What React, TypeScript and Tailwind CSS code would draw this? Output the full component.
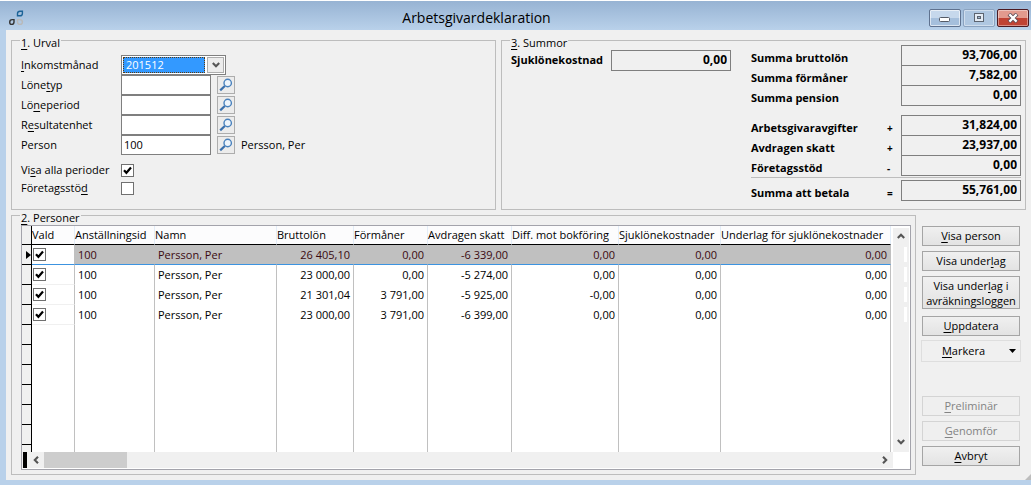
import React from 'react';
import clsx from 'clsx';

type Column = { label: string; col: string; numeric?: boolean };

const columns: Column[] = [
  { label: 'Vald', col: 'w-[43px]' },
  { label: 'Anställningsid', col: 'w-[80px]' },
  { label: 'Namn', col: 'w-[122px]' },
  { label: 'Bruttolön', col: 'w-[77px]', numeric: true },
  { label: 'Förmåner', col: 'w-[74px]', numeric: true },
  { label: 'Avdragen skatt', col: 'w-[84px]', numeric: true },
  { label: 'Diff. mot bokföring', col: 'w-[107px]', numeric: true },
  { label: 'Sjuklönekostnader', col: 'w-[102px]', numeric: true },
  { label: 'Underlag för sjuklönekostnader', col: '', numeric: true },
];

const persons = [
  ['100', 'Persson, Per', '26 405,10', '0,00', '-6 339,00', '0,00', '0,00', '0,00'],
  ['100', 'Persson, Per', '23 000,00', '0,00', '-5 274,00', '0,00', '0,00', '0,00'],
  ['100', 'Persson, Per', '21 301,04', '3 791,00', '-5 925,00', '-0,00', '0,00', '0,00'],
  ['100', 'Persson, Per', '23 000,00', '3 791,00', '-6 399,00', '0,00', '0,00', '0,00'],
];

const emptyRows = [0, 1, 2, 3, 4, 5, 6];

const grossSums = [
  { id: 'brutto', label: 'Summa bruttolön', sign: '', value: '93,706,00' },
  { id: 'formaner', label: 'Summa förmåner', sign: '', value: '7,582,00' },
  { id: 'pension', label: 'Summa pension', sign: '', value: '0,00' },
];

const feeSums = [
  { id: 'avgifter', label: 'Arbetsgivaravgifter', sign: '+', value: '31,824,00' },
  { id: 'skatt', label: 'Avdragen skatt', sign: '+', value: '23,937,00' },
  { id: 'stod', label: 'Företagsstöd', sign: '-', value: '0,00' },
];

// Label with an underlined access key: "Löne|t|yp"
const Key: React.FC<{ text: string }> = ({ text }) => {
  const [before, key, after] = text.split('|');
  return (
    <span>
      {before}
      <span className="underline underline-offset-2">{key}</span>
      {after}
    </span>
  );
};

const Group: React.FC<{ title: string; className?: string; children: React.ReactNode }> = ({ title, className, children }) => (
  <section className={clsx('relative border border-[#bdbdbd]', className)}>
    <h2 className="absolute -top-1 left-2 bg-[#f0f0f0] px-px leading-3">
      <Key text={title} />
    </h2>
    {children}
  </section>
);

const CheckBox: React.FC<{ id?: string; label?: string; checked?: boolean }> = ({ id, label, checked }) => (
  <span className="relative block size-[13px]">
    <input
      id={id}
      type="checkbox"
      aria-label={label}
      defaultChecked={checked}
      className="peer block size-[13px] appearance-none border border-[#707070] bg-white"
    />
    <svg viewBox="0 0 13 13" className="pointer-events-none absolute inset-0 hidden size-[13px] peer-checked:block">
      <path d="M3 6.2 L5.4 8.8 L10 3.6" fill="none" stroke="#000" strokeWidth="2.2" />
    </svg>
  </span>
);

const Chevron: React.FC<{ className?: string }> = ({ className }) => (
  <svg viewBox="0 0 8 6" className={clsx('h-[6px] w-2', className)}>
    <path d="M0.8 1 L4 4.2 L7.2 1" fill="none" stroke="#555" strokeWidth="2.1" />
  </svg>
);

const LookupRow: React.FC<{ id: string; label: string; value?: string; note?: string }> = ({ id, label, value, note }) => (
  <div className="flex h-5 items-center">
    <label htmlFor={id} className="w-[100px] shrink-0">
      <Key text={label} />
    </label>
    <input id={id} defaultValue={value} className="h-5 w-[90px] border border-[#7f7f7f] bg-white px-0.5 pb-0.5 outline-none" />
    <button
      type="button"
      aria-label="Sök"
      className="ml-1.5 flex size-[18px] items-center justify-center border border-[#adadad] bg-[#ececec]"
    >
      <svg viewBox="0 0 14 14" className="size-[14px]">
        <circle cx="8.7" cy="5" r="3.7" fill="#eef5fc" stroke="#4a82bd" strokeWidth="1.4" />
        <path d="M5.8 8 L1.2 12.4" stroke="#3a70ad" strokeWidth="2.2" />
      </svg>
    </button>
    {note && <span className="ml-1.5">{note}</span>}
  </div>
);

const SumRow: React.FC<{ id: string; label: string; sign: string; value: string }> = ({ id, label, sign, value }) => (
  <div className="flex h-5 items-start">
    <label htmlFor={id} className="w-[136px] pt-1 leading-[18px]">
      {label}
    </label>
    <span className="w-[14px] pt-1 text-[10px] leading-[18px]">{sign}</span>
    <input
      id={id}
      readOnly
      value={value}
      className="h-[21px] w-[120px] border border-[#7f7f7f] bg-[#f0f0f0] pr-[3px] pb-0.5 text-right text-[12px] outline-none"
    />
  </div>
);

const ActionButton: React.FC<{ text: string; className?: string; disabled?: boolean; children?: React.ReactNode }> = ({
  text,
  className,
  disabled,
  children,
}) => (
  <button
    type="button"
    disabled={disabled}
    className={clsx(
      'mx-px border leading-4',
      disabled
        ? 'border-[#d4d4d4] bg-[#efefef] text-[#838383]'
        : 'border-[#a5a5a5] bg-linear-to-b from-[#f0f0f0] to-[#e3e3e3]',
      className,
    )}
  >
    {children ?? <Key text={text} />}
  </button>
);

const TitleBar: React.FC = () => (
  <header className="flex h-[30px] items-center border-t border-white bg-linear-to-b from-[#97b3d3] to-[#b9d1ea] pt-1 pr-0.5 pl-2">
    <svg viewBox="0 0 16 16" className="size-4 shrink-0" fill="none" strokeWidth="1.4">
      <path d="M9.5 5.8 V3.6 Q9.5 1.2 12 1.2 H14.4 V3.4 Q14.4 5.8 12 5.8 Z" stroke="#1b6397" />
      <path d="M6 9.6 V12 Q6 14.4 3.8 14.4 Q1.7 14.4 1.7 12.2 Q1.7 9.6 4.2 9.6 H6 Z" stroke="#333" />
      <path d="M9.5 9.6 H12 Q14.4 9.6 14.4 12 Q14.4 14.4 12 14.4 Q9.5 14.4 9.5 12 Z" stroke="#b9b9b9" />
    </svg>
    <h1 className="flex-1 text-center text-[14px] leading-5">Arbetsgivardeklaration</h1>
    <div className="flex gap-0.5">
      <button
        type="button"
        aria-label="Minimera"
        className="flex h-[18px] w-8 items-center justify-center rounded-xs border border-[#5f728f] bg-linear-to-b from-[#c6d8ec] from-50% to-[#a5bfdc] to-50% inset-ring inset-ring-white/60"
      >
        <svg viewBox="0 0 12 10" className="h-[10px] w-3">
          <rect x="0.5" y="4.5" width="10" height="4" rx="1" fill="#fff" stroke="#555b66" />
        </svg>
      </button>
      <button
        type="button"
        aria-label="Maximera"
        className="flex h-[18px] w-8 items-center justify-center rounded-xs border border-[#8ba3c0] bg-[#afc7e1] inset-ring inset-ring-white/40"
      >
        <svg viewBox="0 0 12 10" className="h-[10px] w-3">
          <rect x="1.5" y="0.5" width="9" height="8" fill="#e3ebf4" stroke="#5c6470" />
          <rect x="4.5" y="3.5" width="3" height="2" fill="#9fb6d0" stroke="#5c6470" />
        </svg>
      </button>
      <button
        type="button"
        aria-label="Stäng"
        className="flex h-[18px] w-8 items-center justify-center rounded-xs border border-[#4c1a22] bg-linear-to-b from-[#e29a8e] from-50% to-[#c04334] to-50% inset-ring inset-ring-white/40"
      >
        <svg viewBox="0 0 12 10" className="h-[10px] w-3">
          <path d="M2 1 L10 9 M10 1 L2 9" stroke="#5a4a55" strokeWidth="4" />
          <path d="M2.4 1.4 L9.6 8.6 M9.6 1.4 L2.4 8.6" stroke="#fff" strokeWidth="2.2" />
        </svg>
      </button>
    </div>
  </header>
);

const PersonTable: React.FC = () => (
  <div className="border border-[#a3a3ab] bg-white pr-px">
    <div className="flex h-[226px]">
      <div className="min-w-0 flex-1 overflow-hidden">
        <table className="w-full table-fixed border-separate border-spacing-0">
          <colgroup>
            <col className="w-[10px]" />
            {columns.map((c) => (
              <col key={c.label} className={c.col} />
            ))}
          </colgroup>
          <thead>
            <tr className="h-[19px]">
              <td className="border-r border-b border-black bg-[#f0f0f0] p-0" />
              {columns.map((c) => (
                <th
                  key={c.label}
                  className="border-r border-b border-r-[#e3edf8] border-b-black bg-[#fcfcfd] p-0 text-left leading-[18px] font-normal whitespace-nowrap"
                >
                  {c.label}
                </th>
              ))}
            </tr>
          </thead>
          <tbody>
            {persons.map((row, i) => (
              <tr key={i} className={clsx('h-5', i === 0 && 'bg-[#c0c0c0] text-[#3a0a10]')}>
                <td className="border-r border-b border-black bg-[#f0f0f0] p-0">
                  {i === 0 && (
                    <svg viewBox="0 0 5 8" className="ml-1 h-2 w-[5px]">
                      <path d="M0 0 L5 4 L0 8 Z" />
                    </svg>
                  )}
                </td>
                <td
                  className={clsx(
                    'border-r border-b border-r-[#c0c0c0] bg-white p-0 pl-px',
                    i === 0 ? 'border-b-[#3c93e0]' : 'border-b-[#f0f0f0]',
                  )}
                >
                  <CheckBox label={`Vald rad ${i + 1}`} checked />
                </td>
                {row.map((value, j) => (
                  <td
                    key={j}
                    className={clsx(
                      'border-r border-r-[#c0c0c0] px-[3px] pt-0 leading-[19px] whitespace-nowrap',
                      j > 1 && 'text-right',
                      i === 0 ? 'border-b border-b-[#3c93e0] pb-0' : 'pb-px',
                    )}
                  >
                    {value}
                  </td>
                ))}
              </tr>
            ))}
            {emptyRows.map((r) => (
              <tr key={r} className="h-5">
                <td className="border-r border-b border-black bg-[#f0f0f0] p-0" />
                {columns.map((c) => (
                  <td key={c.label} className="border-r border-[#c0c0c0] p-0" />
                ))}
              </tr>
            ))}
          </tbody>
        </table>
      </div>
      <div className="mt-0.5 ml-0.5 flex w-4 flex-col items-center justify-between bg-[#f0f0f0] pb-0.5">
        <button type="button" aria-label="Rulla upp" className="flex h-4 w-4 items-center justify-center">
          <Chevron className="rotate-180" />
        </button>
        <div className="mt-[3px] mb-auto flex w-full flex-col items-end gap-[5px] pr-0.5">
          {persons.map((_, i) => (
            <span key={i} className="h-[15px] w-[3px] bg-white" />
          ))}
        </div>
        <button type="button" aria-label="Rulla ner" className="flex h-4 w-4 items-center justify-center">
          <Chevron />
        </button>
      </div>
    </div>
    <div className="mr-4 mb-px flex h-4 items-center bg-[#f0f0f0] pl-px">
      <span className="h-4 w-1 bg-black" />
      <button type="button" aria-label="Rulla vänster" className="flex h-4 w-[17px] items-center justify-center">
        <Chevron className="rotate-90" />
      </button>
      <span className="h-4 w-[83px] bg-[#cdcdcd]" />
      <button type="button" aria-label="Rulla höger" className="ml-auto flex h-4 w-4 items-center justify-center">
        <Chevron className="-rotate-90" />
      </button>
    </div>
  </div>
);

const App: React.FC = () => (
  <div className="bg-[#b9d1ea] pb-[5px] font-['Open_Sans',sans-serif] text-[11px] text-black">
    <TitleBar />
    <main className="relative ml-1.5 bg-[#f0f0f0] px-[5px] pt-[10px] pb-[5px]">
      <div className="grid grid-cols-[485fr_525fr] gap-[5px]">
        <Group title="|1|. Urval" className="pt-[14px] pb-3 pl-[9px]">
          <div className="flex h-5 items-center">
            <label htmlFor="manad" className="w-[100px]">
              <Key text="|I|nkomstmånad" />
            </label>
            <div className="flex h-5 w-[105px] gap-0.5 border border-[#7f7f7f] bg-white p-px">
              <select
                id="manad"
                className="min-w-0 flex-1 appearance-none border border-dotted border-[#5a3a10] bg-[#3399ff] pl-0.5 leading-[14px] text-white outline-none"
              >
                <option>201512</option>
              </select>
              <span className="flex w-[17px] items-center justify-center border border-[#adadad] bg-[#ececec]">
                <Chevron />
              </span>
            </div>
          </div>
          <LookupRow id="lonetyp" label="Löne|t|yp" />
          <LookupRow id="loneperiod" label="Lö|n|eperiod" />
          <LookupRow id="resultatenhet" label="R|e|sultatenhet" />
          <LookupRow id="person" label="Person" value="100" note="Persson, Per" />
          <div className="mt-1.5 flex h-[18px] items-center">
            <label htmlFor="perioder" className="w-[100px]">
              <Key text="Vi|s|a alla perioder" />
            </label>
            <CheckBox id="perioder" checked />
          </div>
          <div className="flex h-[18px] items-center">
            <label htmlFor="foretagsstod" className="w-[100px]">
              <Key text="Företagsstö|d|" />
            </label>
            <CheckBox id="foretagsstod" />
          </div>
        </Group>

        <Group title="|3|. Summor" className="flex justify-between pt-1 pr-1 pl-[9px] font-bold [&>h2]:font-normal">
          <div className="mt-[5px] flex h-[21px] items-center">
            <label htmlFor="sjuklon" className="w-[100px]">
              Sjuklönekostnad
            </label>
            <input
              id="sjuklon"
              readOnly
              value="0,00"
              className="h-[21px] w-[120px] border border-[#7f7f7f] bg-[#f0f0f0] pr-[3px] pb-0.5 text-right text-[12px] outline-none"
            />
          </div>
          <div>
            {grossSums.map((s) => (
              <SumRow key={s.id} {...s} />
            ))}
            <div className="mt-[10px] mb-0.5 border-b border-[#bdbdbd] pb-0.5">
              {feeSums.map((s) => (
                <SumRow key={s.id} {...s} />
              ))}
            </div>
            <SumRow id="betala" label="Summa att betala" sign="=" value="55,761,00" />
          </div>
        </Group>
      </div>

      <div className="mt-[5px] flex items-start gap-[5px] pr-[5px]">
        <Group title="|2|. Personer" className="min-w-0 flex-1 pt-[9px] pr-1 pb-1 pl-[9px]">
          <PersonTable />
        </Group>
        <div className="flex w-[100px] flex-col pt-[11px]">
          <ActionButton text="|V|isa person" className="h-5" />
          <ActionButton text="Visa under|l|ag" className="mt-[5px] h-5" />
          <ActionButton text="" className="mt-[5px] h-[33px] leading-[15px]">
            <Key text="Visa under|l|ag i" />
            <br />
            avräkningsloggen
          </ActionButton>
          <ActionButton text="|U|ppdatera" className="mt-[7px] h-5" />
          <button type="button" className="mt-1 flex h-[22px] items-center border border-[#dedede] pr-1">
            <span className="flex-1 pr-1">
              <Key text="|M|arkera" />
            </span>
            <svg viewBox="0 0 7 4" className="h-1 w-[7px]">
              <path d="M0 0 H7 L3.5 4 Z" />
            </svg>
          </button>
          <ActionButton text="|P|reliminär" className="mt-[34px] h-5" disabled />
          <ActionButton text="|G|enomför" className="mt-[5px] h-5" disabled />
          <ActionButton text="|A|vbryt" className="mt-[5px] h-5" />
        </div>
      </div>
      <svg viewBox="0 0 6 6" className="absolute right-0 bottom-0 size-1.5">
        <path d="M6 0 V6 H0 Z" fill="#bdbdbd" />
      </svg>
    </main>
  </div>
);

export default App;
